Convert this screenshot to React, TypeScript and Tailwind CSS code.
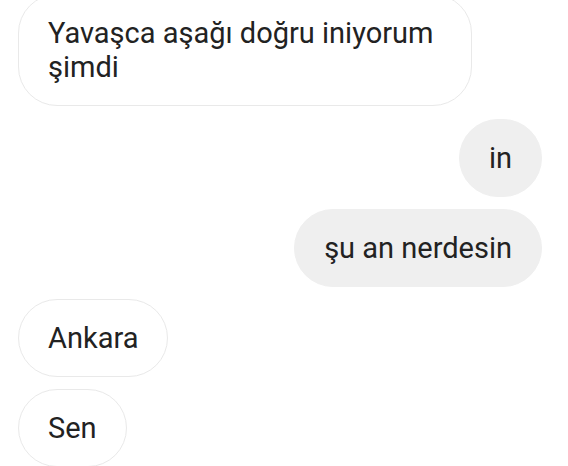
import React from "react";

function Left({ children, className = "" }: { children: React.ReactNode; className?: string }) {
  return (
    <div
      className={
        "self-start rounded-[39px] border border-[#e9e9e9] bg-white px-[29px] py-[21px] text-[29px] leading-[34px] text-[#222222] " +
        className
      }
    >
      {children}
    </div>
  );
}

function Right({ children }: { children: React.ReactNode }) {
  return (
    <div className="self-end rounded-[39px] border border-[#efefef] bg-[#efefef] px-[29px] py-[21px] text-[29px] leading-[34px] text-[#222222]">
      {children}
    </div>
  );
}

export default function App() {
  return (
    <div
      className="h-[466px] w-[568px] overflow-hidden bg-white"
      style={{ fontFamily: "Roboto, 'Noto Sans', sans-serif" }}
    >
      <div className="-mt-[6px] flex flex-col gap-3 pl-[18px] pr-[26px]">
        <Left className="mb-px max-w-[454px]">Yavaşca aşağı doğru iniyorum şimdi</Left>
        <Right>in</Right>
        <Right>şu an nerdesin</Right>
        <Left>Ankara</Left>
        <Left>Sen</Left>
      </div>
    </div>
  );
}
